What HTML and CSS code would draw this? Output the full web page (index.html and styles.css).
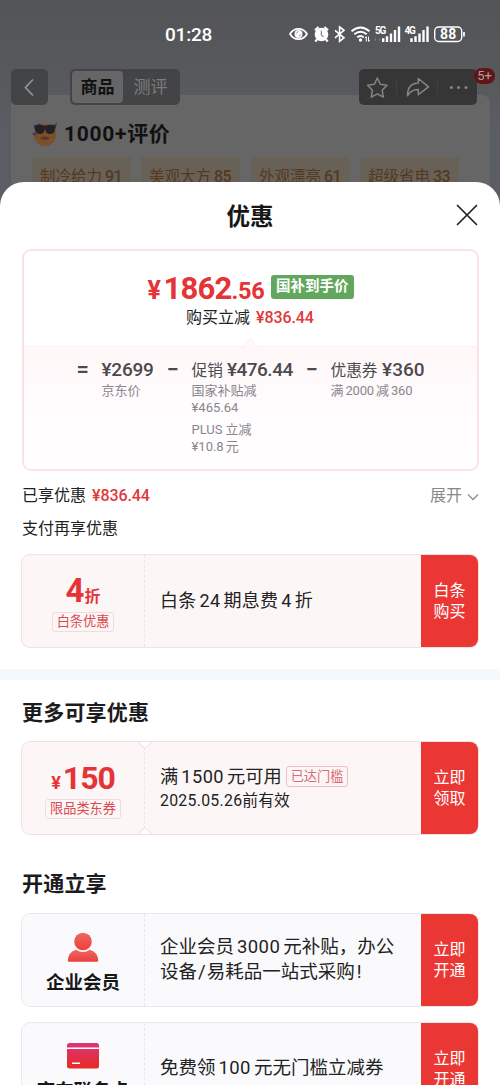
FILE: index.html
```html
<!DOCTYPE html>
<html lang="zh-CN">
<head>
<meta charset="utf-8">
<title>优惠</title>
<link rel="stylesheet" href="styles.css">
</head>
<body>
<div class="screen">
  <div class="page">
    <div class="status">
      <span class="clock">01:28</span>
      <svg class="status-icons" width="180" height="20" viewBox="0 0 180 20" fill="none" stroke="#fff">
        <path d="M1 10C5 3.2 14 3.2 18 10C14 16.800 5 16.800 1 10Z" stroke-width="1.7"/>
        <circle cx="9.500" cy="10" r="4" fill="#fff" stroke="none"/><path d="M7.500 9.500q.3-1.700 2-1.900M12 10q-.2 1.800-2 2" stroke="#77787b" stroke-width=".7"/>
        <circle cx="32.500" cy="10.500" r="6.800" fill="#fff" stroke="none"/>
        <path d="M26 6.200l3.600-3.200M39 6.200L35.400 3M28 15.500l-1.700 2M37 15.500l1.700 2" stroke-width="2.200"/>
        <path d="M32.300 6.500v4.300l2.300 2" stroke="#77787b" stroke-width="1.100"/>
        <path d="M46 6.300l9 7.500-4.400 3.500V2.800L55 6.300l-9 7.500" stroke-width="1.600"/>
        <path d="M62.500 7.300Q71.500-.3 80.500 7.300M65.300 10.300q6.200-5.200 12.400 0M68.200 13.300q3.300-2.600 6.600 0" stroke-width="1.900"/>
        <circle cx="71.500" cy="16" r="1.700" fill="#fff" stroke="none"/>
        <path d="M77.300 17.500v-4.800l-1.300 1.500M79.500 12.700v4.800l1.300-1.500" stroke-width="1"/>
        <path d="M87 14.500l-1.200 1 1.200 1M90 14.500l1.200 1-1.200 1" stroke="#96979a" stroke-width=".8"/>
        <path d="M94.200 18v-3.800M98 18v-5.700M102 18V9.500M106 18V6M110 18V2.500" stroke-width="2.400"/>
        <path d="M122.500 18v-3.800M126.500 18v-5.700M130.500 18V9.500M134.500 18V6M138.500 18V2.500" stroke-width="2.400"/>
        <text class="net" x="86" y="9.500">5G</text>
        <text class="net" x="115.500" y="9.500">4G</text>
        <rect x="145.700" y="3" width="27" height="14.500" rx="4" stroke-width="1.400"/>
        <path d="M175 8v4.500" stroke-width="1.700"/>
        <text class="battery" x="151" y="15.200">88</text>
      </svg>
    </div>
    <div class="review-card">
      <div class="review-title">
        <svg width="26" height="26" viewBox="0 0 26 26">
          <circle cx="13" cy="14" r="11" fill="#795028"/>
          <path d="M2 4.500l5-1 5 1 1 .8 1-.8 5-1 5 1-1 4.500q-1 4-5 4t-4.500-4L13 8l-.5 1q-.5 4-4.500 4t-5-4z" fill="#252026"/>
          <path d="M0 13l3-2 1.500 3-2 .5zM22 4l3-3-.5 4zM3 4.500L7 2.500l3 1z" fill="#493269"/>
          <path d="M8 17q5-3 10 0-5 4-10 0z" fill="#673027"/>
        </svg>
        <span>1000+评价</span>
      </div>
      <div class="chips">
        <span class="chip">制冷给力<b>91</b></span>
        <span class="chip">美观大方<b>85</b></span>
        <span class="chip">外观漂亮<b>61</b></span>
        <span class="chip">超级省电<b>33</b></span>
      </div>
    </div>
    <div class="nav">
      <div class="back"><svg width="36" height="36" viewBox="0 0 36 36" fill="none" stroke="#929292" stroke-width="1.800"><path d="M22 10.500l-7.500 8 7.500 8"/></svg></div>
      <div class="tabs"><span class="tab active">商品</span><span class="tab">测评</span></div>
      <div class="tools">
        <svg width="118" height="36" viewBox="0 0 118 36" fill="none" stroke="#858585" stroke-width="1.500" stroke-linejoin="round">
          <path d="M18.300 9l3 6.300 6.700 1-4.800 4.900 1.100 6.900-6-3.300-6 3.300 1.100-6.900-4.800-4.900 6.700-1z"/>
          <path d="M59.300 9.500l10.200 8.400-10.200 7.800v-5.200q-7-.2-10.800 6.300-.2-12.200 10.800-12.800z"/>
          <path d="M37.500 12v13M78.500 12v13" stroke="#414141" stroke-width="1"/>
          <g fill="#858585" stroke="none"><circle cx="92.300" cy="18.500" r="1.500"/><circle cx="99.500" cy="18.500" r="1.500"/><circle cx="107" cy="18.500" r="1.500"/></g>
        </svg>
        <span class="badge">5+</span>
      </div>
    </div>
  </div>

  <div class="sheet">
    <div class="sheet-head">
      <h1>优惠</h1>
      <svg class="close" width="22" height="22" viewBox="0 0 22 22" stroke="#222" stroke-width="1.700" stroke-linecap="round"><path d="M1.500 1.500l19 19M20.500 1.500l-19 19"/></svg>
    </div>

    <div class="price-box">
      <div class="final">
        <span class="yen">¥</span><span class="int">1862</span><span class="dec">.56</span><span class="tag-green">国补到手价</span>
      </div>
      <div class="saved">购买立减<span class="red amount">¥836.44</span></div>
      <div class="formula">
        <svg class="notch" width="16" height="10" viewBox="0 0 16 10"><path d="M1 9.500L8 1.500l7 8" fill="#fff9fa" stroke="#fbe9ec"/></svg>
        <span class="op eq">=</span>
        <div class="term t1"><div class="main"><b>¥2699</b></div><p>京东价</p></div>
        <span class="op">−</span>
        <div class="term t2"><div class="main">促销<b class="gap">¥476.44</b></div><p>国家补贴减</p><p>¥465.64</p><p class="next"><span class="plus">PLUS</span>立减</p><p>¥10.8<span class="unit">元</span></p></div>
        <span class="op">−</span>
        <div class="term"><div class="main">优惠券<b class="gap wide-gap">¥360</b></div><p>满<i>2000</i>减<i class="last">360</i></p></div>
      </div>
    </div>

    <div class="row"><span>已享优惠<span class="red amount">¥836.44</span></span>
      <span class="expand">展开<svg width="12" height="8" viewBox="0 0 12 8" fill="none" stroke="#929292" stroke-width="1.500"><path d="M1 1.500l5 5 5-5"/></svg></span></div>
    <div class="row second">支付再享优惠</div>

    <div class="coupon pink first">
      <div class="left"><div class="discount"><span class="four">4</span>折</div><span class="label">白条优惠</span></div>
      <div class="body"><div>白条<i>24</i>期息费<i>4</i>折</div></div>
      <div class="btn">白条<br>购买</div>
    </div>

    <div class="divider"></div>
    <h2 class="more">更多可享优惠</h2>
    <div class="coupon pink ticket">
      <div class="left"><div class="discount"><span class="small-yen">¥</span><span class="value">150</span></div><span class="label">限品类东券</span></div>
      <div class="body"><div class="cond">满<i>1500</i>元可用<span class="reached">已达门槛</span></div><div class="date"><span class="day">2025.05.26</span>前有效</div></div>
      <div class="btn">立即<br>领取</div>
    </div>

    <h2 class="open">开通立享</h2>
    <div class="coupon">
      <div class="left member">
        <svg width="32" height="31" viewBox="0 0 32 31"><defs><linearGradient id="m" x2="0" y2="1"><stop stop-color="#ed6963"/><stop offset="1" stop-color="#ed3f3b"/></linearGradient></defs><g fill="url(#m)"><circle cx="16" cy="9.500" r="8.800"/><path d="M.8 28.500Q1.500 20 9 17.800q7 4.600 14 0 7.500 2.200 8.200 10.700 0 1.200-1.200 1.200H2q-1.200 0-1.200-1.200z"/></g></svg>
        <strong>企业会员</strong>
      </div>
      <div class="body"><div class="wide">企业会员<i>3000</i>元补贴，办公<br>设备<span class="slash">/</span>易耗品一站式采购<span class="bang">!</span></div></div>
      <div class="btn">立即<br>开通</div>
    </div>
    <div class="coupon last-card">
      <div class="left card">
        <svg width="32" height="26" viewBox="0 0 32 26"><defs><linearGradient id="c" x2="0" y2="1"><stop stop-color="#dc347c"/><stop offset="1" stop-color="#e62b24"/></linearGradient></defs><rect width="32" height="25.500" rx="2.500" fill="url(#c)"/><path d="M0 5.300h32" stroke="#fff" stroke-width="1.400"/><path d="M5 20.300h8" stroke="#fff" stroke-width="1.600"/></svg>
        <strong>京东联名卡</strong>
      </div>
      <div class="body"><div class="wide">免费领<i>100</i>元无门槛立减券</div></div>
      <div class="btn">立即<br>开通</div>
    </div>
  </div>
</div>
</body>
</html>
```
FILE: styles.css
```css
* { box-sizing: border-box; }
body { margin: 0; font-family: Roboto, "Noto Sans CJK SC", sans-serif; color: #222; }
h1, h2, p { margin: 0; }
i { font-style: normal; }
.screen { width: 500px; height: 1085px; overflow: hidden; background: #fff; }

.page { position: relative; height: 206px; padding-top: 95px; background: linear-gradient(#535457, #595a5e 95px, #5b5d65 130px, #5b5d65); }
.status { position: absolute; inset: 0 0 auto; height: 68px; }
.clock { position: absolute; left: 165px; top: 23px; line-height: 24px; font-size: 19px; font-weight: 500; color: #fff; letter-spacing: -.2px; }
.status-icons { position: absolute; left: 289px; top: 24px; }
.net { fill: #fff; stroke: none; font-size: 10px; font-weight: 700; letter-spacing: -1.2px; }
.battery { fill: #fff; stroke: none; font-size: 14px; font-weight: 700; letter-spacing: .2px; }
.nav { position: absolute; inset: 69px 0 auto 11px; display: flex; }
.back { width: 37px; height: 36px; border-radius: 5px; background: #434446; margin-right: 22px; }
.tabs { width: 110px; height: 36px; padding: 2px; display: flex; border-radius: 5px; background: #434446; }
.tab { flex: 1; height: 32px; font-size: 17px; line-height: 33px; text-align: center; color: #7c7c7c; border-radius: 4px; }
.tab.active { flex: 0 0 51px; background: #666; color: #111; font-weight: 700; }
.tools { position: relative; width: 118px; height: 36px; margin-left: 179px; border-radius: 5px; background: #363636; }
.badge { position: absolute; right: -18px; top: -1px; width: 21px; height: 16px; border-radius: 8px; background: #631414; color: #a3a3a3; font-size: 13px; line-height: 16px; text-align: center; }
.review-card { margin: 0 10px 0 11px; height: 111px; border-radius: 8px 8px 0 0; background: #666; padding: 25px 21px 0; }
.review-title { display: flex; align-items: center; gap: 6px; height: 27px; font-size: 21px; font-weight: 700; color: #111; }
.review-title span { letter-spacing: .7px; line-height: 24px; margin-top: 1px; }
.chips { display: flex; gap: 10px; margin-top: 10px; }
.chip { width: 99px; height: 40px; padding: 8px 0 0 8px; line-height: 24px; font-size: 15.500px; color: #53391f; background: #686158; white-space: nowrap; border-radius: 3px; }
.chip b { font-weight: 500; font-size: 16px; margin-left: 3px; letter-spacing: -.6px; }
.chip:nth-child(3), .chip:nth-child(4) { position: relative; left: 1px; }

.sheet { position: relative; height: 903px; margin-top: -24px; padding: 0 22px; background: #fff; border-radius: 24px 24px 0 0; }
.sheet-head { position: relative; height: 67px; padding-top: 17px; }
h1 { text-align: center; font-size: 23.500px; line-height: 36px; font-weight: 700; color: #171717; }
.close { position: absolute; right: 0; top: 22px; }
.red { color: #e1383b; }
.price-box { height: 222px; border: 2px solid #f9e3e7; border-radius: 9px; padding-top: 20px; overflow: hidden; margin: 0 -0.5px; }
.final { display: flex; align-items: baseline; height: 36px; line-height: 36px; padding-left: 124px; color: #e53437; font-weight: 700; }
.yen { font-size: 25px; width: 16px; }
.int { font-size: 31px; letter-spacing: -.8px; }
.dec { font-size: 23.500px; letter-spacing: -.2px; }
.tag-green { margin: 4px 0 0 6px; width: 83px; height: 24px; line-height: 24px; font-size: 14.500px; color: #fff; text-align: center; border-radius: 3px; background: #62a75d; align-self: flex-start; }
.saved { height: 39px; padding: 1px 0 0 162.500px; line-height: 20px; font-size: 16px; }
.amount { font-weight: 500; margin-left: 6px; letter-spacing: -.1px; }
.formula { position: relative; display: flex; height: 125px; padding: 10px 0 0 53px; background: linear-gradient(#fff7f8, #fffdfe 60%, #fffdfe); color: #4c4a4e; border-top: 1px solid #fceff1; }
.notch { position: absolute; left: 218px; top: -10px; }
.op { width: 12px; margin-right: 13px; font-size: 22px; line-height: 26px; font-weight: 500; }
.term.t1 { width: 65px; }
.term.t2 { width: 114px; }
.main { font-size: 15.700px; line-height: 26px; height: 25px; white-space: nowrap; }
.main b { font-size: 19px; font-weight: 500; letter-spacing: -.25px; }
.main .gap { margin-left: 4px; letter-spacing: -.5px; }
.main .wide-gap { margin-left: 4.500px; letter-spacing: 0; }
.term p { font-size: 13px; line-height: 17px; color: #88868e; white-space: nowrap; }
.term p.next { margin-top: 5px; }
.term p i { margin: 0 2px; letter-spacing: -.2px; }
.plus { margin-right: 3px; }
.unit { margin-left: 2px; }
.row { display: flex; justify-content: space-between; height: 24px; margin-top: 13px; font-size: 16px; line-height: 24px; }
.row.second { margin-top: 9px; }
.expand { color: #888; }
.expand svg { margin: 0 -1px 0 5px; }

.coupon { position: relative; height: 94px; display: flex; border: 1px solid #e9eaef; border-radius: 9px; background: #fafafd; overflow: hidden; margin: 0 -0.5px 0 -1px; }
.coupon.pink { background: #fcf6f6; border-color: #f3e0e3; }
.coupon.first { margin-top: 13px; }
.left { width: 123px; border-right: 1px dashed #efe5e9; display: flex; flex-direction: column; align-items: center; }
.body { flex: 1; padding-left: 15px; display: flex; flex-direction: column; justify-content: center; font-size: 18px; line-height: 25px; white-space: nowrap; }
.body i { margin: 0 3px; letter-spacing: .4px; }
.first .body > div { letter-spacing: .25px; margin-top: -2px; }
.btn { width: 58px; margin: -1px; display: flex; align-items: center; justify-content: center; background: #eb3733; color: #fff; font-size: 16px; line-height: 21px; }
.discount { color: #e53437; font-weight: 700; font-size: 16px; line-height: 36px; height: 36px; margin-top: 21px; }
.four { font-size: 33px; line-height: 30px; }
.value { font-size: 32px; line-height: 30px; letter-spacing: -1px; }
.small-yen { font-size: 18px; margin-right: 2px; }
.label { border: 1px solid #f2dadd; border-radius: 3px; height: 20px; line-height: 18px; padding: 0 4px; font-size: 13.200px; color: #d94b50; }
.divider { height: 11px; background: #f5f8fc; margin: 21px -22px 0; }
h2 { font-size: 21px; line-height: 30px; font-weight: 700; color: #1c1c1e; letter-spacing: .2px; }
.more { margin: 18px 0 13px; }
.open { margin: 34px 0 14px; }
.ticket::before, .ticket::after { content: ""; position: absolute; left: 117px; width: 10px; height: 10px; border: 1px solid #f3e0e3; border-radius: 4px; background: #fff; transform: rotate(45deg); }
.ticket::before { top: -7px; }
.ticket::after { bottom: -7px; }
.cond { display: flex; align-items: center; height: 25px; font-size: 18.200px; }
.cond i { letter-spacing: .5px; }
.reached { border: 1px solid #efbfc7; border-radius: 3px; color: #db6c79; font-size: 13.200px; line-height: 19px; padding: 0 4px; margin-left: 4px; }
.date { font-size: 15.800px; line-height: 24px; }
.day { letter-spacing: .3px; }
.left strong { font-size: 18.500px; line-height: 28px; color: #171717; white-space: nowrap; }
.member svg { margin-top: 18px; }
.member strong { margin-top: 6px; }
.card svg { margin-top: 20px; }
.card strong { margin-top: 8px; }
.wide { font-size: 18.500px; }
.last-card .wide { margin-top: -2px; }
.slash { margin: 0 1px; }
.bang { margin-left: 2px; }
.last-card { margin-top: 15px; }
```
